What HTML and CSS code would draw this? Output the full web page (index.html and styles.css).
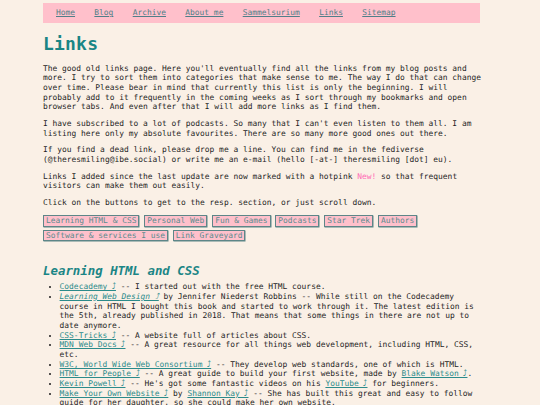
FILE: index.html
```html
<!DOCTYPE html>
<html lang="en">
<head>
<meta charset="utf-8">
<title>Links</title>
<link rel="stylesheet" href="styles.css">
</head>
<body>
<div class="page">
	<nav class="topnav">
		<a href="#">Home</a>
		<a href="#">Blog</a>
		<a href="#">Archive</a>
		<a href="#">About me</a>
		<a href="#">Sammelsurium</a>
		<a href="#">Links</a>
		<a href="#">Sitemap</a>
	</nav>

	<h1 class="title">Links</h1>

	<p>The good old links page. Here you'll eventually find all the links from my blog posts and more. I try to sort them into categories that make sense to me. The way I do that can change over time. Please bear in mind that currently this list is only the beginning. I will probably add to it frequently in the coming weeks as I sort through my bookmarks and open browser tabs. And even after that I will add more links as I find them.</p>

	<p>I have subscribed to a lot of podcasts. So many that I can't even listen to them all. I am listing here only my absolute favourites. There are so many more good ones out there.</p>

	<p>If you find a dead link, please drop me a line. You can find me in the fediverse (@theresmiling@ibe.social) or write me an e-mail (hello [-at-] theresmiling [dot] eu).</p>

	<p>Links I added since the last update are now marked with a hotpink <span class="new">New!</span> so that frequent visitors can make them out easily.</p>

	<p>Click on the buttons to get to the resp. section, or just scroll down.</p>

	<div class="jump">
		<a class="btn" href="#html">Learning HTML &amp; CSS</a>
		<a class="btn" href="#web">Personal Web</a>
		<a class="btn" href="#fun">Fun &amp; Games</a>
		<a class="btn" href="#pod">Podcasts</a>
		<a class="btn" href="#trek">Star Trek</a>
		<a class="btn" href="#authors">Authors</a>
		<a class="btn" href="#software">Software &amp; services I use</a>
		<a class="btn" href="#grave">Link Graveyard</a>
	</div>

	<h2 class="section" id="html">Learning HTML and CSS</h2>
	<ul class="linklist">
		<li><a href="#">Codecademy ⤴</a> -- I started out with the free HTML course.</li>
		<li><a href="#"><i>Learning Web Design ⤴</i></a> by Jennifer Niederst Robbins -- While still on the Codecademy course in HTML I bought this book and started to work through it. The latest edition is the 5th, already published in 2018. That means that some things in there are not up to date anymore.</li>
		<li><a href="#">CSS-Tricks ⤴</a> -- A website full of articles about CSS.</li>
		<li><a href="#">MDN Web Docs ⤴</a> -- A great resource for all things web development, including HTML, CSS, etc.</li>
		<li><a href="#">W3C, World Wide Web Consortium ⤴</a> -- They develop web standards, one of which is HTML.</li>
		<li><a href="#">HTML for People ⤴</a> -- A great guide to build your first website, made by <a href="#">Blake Watson ⤴</a>.</li>
		<li><a href="#">Kevin Powell ⤴</a> -- He's got some fantastic videos on his <a href="#">YouTube ⤴</a> for beginners.</li>
		<li><a href="#">Make Your Own Website ⤴</a> by <a href="#">Shannon Kay ⤴</a> -- She has built this great and easy to follow guide for her daughter, so she could make her own website.</li>
	</ul>
</div>
</body>
</html>
```

FILE: styles.css
```css
body{
	margin: 0;
	background-color: #faf0e6;
	color: #1e1e1e;
	font-family: "DejaVu Sans Mono", monospace;
	font-size: 7.92px;
	line-height: 9.67px;
}

.page{
	margin-left: 43px;
	width: 444px;
	padding-top: 3px;
}

.topnav{
	display: flex;
	align-items: center;
	gap: 19.3px;
	width: 424px;
	height: 20px;
	padding-left: 13px;
	background-color: #ffc0cb;
}
.topnav a{
	color: #4f7f88;
}

h1.title{
	margin: 9.5px 0 10px;
	font-size: 18px;
	line-height: 21px;
	color: #1a8585;
	letter-spacing: 0.2px;
}

p{
	margin: 0 0 7px;
}

a{ color: #2b8b8b; }

.new{ color: #ff69b4; }

.jump{
	display: flex;
	flex-wrap: wrap;
	column-gap: 4.8px;
	row-gap: 3px;
	margin-top: 7.5px;
}
.btn{
	padding: 0 2px;
	border: 1px solid #5d8688;
	box-shadow: 0.5px 0.5px 0 #5d8688;
	background-color: #ffc0cb;
	color: #5b8b8e;
	text-decoration: none;
}

h2.section{
	margin: 22.7px 0 3.7px;
	font-size: 12.4px;
	line-height: 14.5px;
	font-style: italic;
	color: #1a8585;
}

.linklist{
	margin: 0;
	padding-left: 16.6px;
}
```
